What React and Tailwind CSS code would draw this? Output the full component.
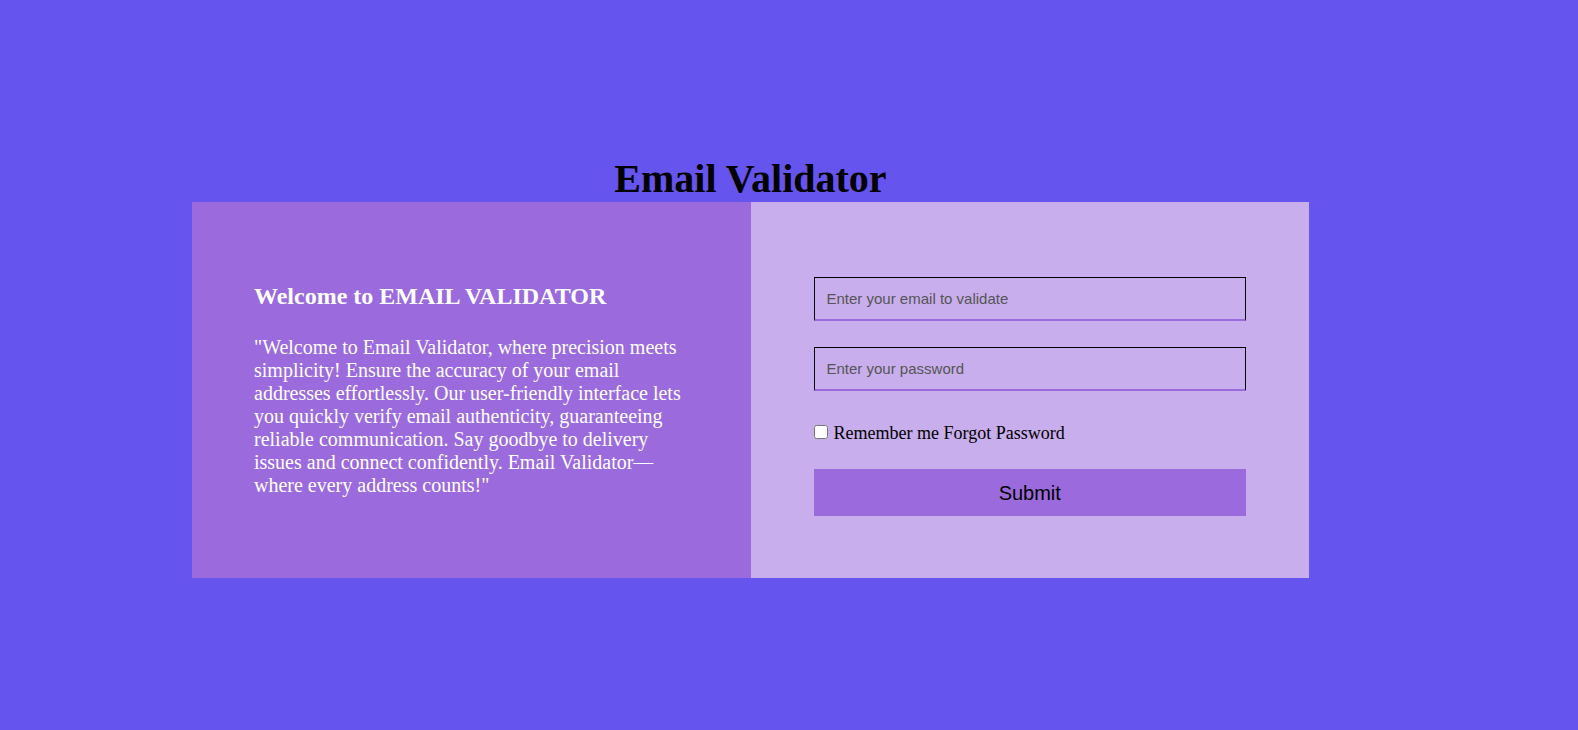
import React from 'react';

const App = () => {
  return (
    <div className="min-h-screen w-full bg-[#6554ed] flex items-center pl-[192px] pt-[4px] font-['Liberation_Serif',serif]">
      <div className="w-[1117px]">
        <h1 className="text-[40px] leading-[46px] font-bold text-black text-center">Email Validator</h1>

        <div className="h-[376px] grid grid-cols-2">
          {/* left: intro */}
          <div className="bg-[#9b6bde] flex flex-col justify-center px-[62px] pb-[2px]">
            <h2 className="text-[24px] leading-[28px] font-bold text-white mb-[26px]">
              Welcome to EMAIL VALIDATOR
            </h2>
            <p className="text-[20px] leading-[23px] text-white">
              "Welcome to Email Validator, where precision meets simplicity! Ensure the accuracy of your email
              addresses effortlessly. Our user-friendly interface lets you quickly verify email authenticity,
              guaranteeing reliable communication. Say goodbye to delivery issues and connect confidently. Email
              Validator—where every address counts!"
            </p>
          </div>

          {/* right: form */}
          <div className="bg-[#c8aeec] px-[63px] pt-[75px]">
            <form className="flex flex-col">
              <input
                type="email"
                placeholder="Enter your email to validate"
                className="h-[44px] w-full border border-black border-b-2 border-b-[#9b6bde] px-3 text-[15px] font-['Liberation_Sans',sans-serif] placeholder:text-[#555] outline-none"
              />
              <input
                type="password"
                placeholder="Enter your password"
                className="mt-[26px] h-[44px] w-full border border-black border-b-2 border-b-[#9b6bde] px-3 text-[15px] font-['Liberation_Sans',sans-serif] placeholder:text-[#555] outline-none"
              />
              <label className="mt-[32px] flex items-center h-[21px] text-[18px] text-black">
                <input type="checkbox" className="w-[14px] h-[14px] mr-[6px] -mt-[3px]" />
                Remember me Forgot Password
              </label>
              <button
                type="button"
                className="mt-[25px] h-[47px] w-full bg-[#9b6bde] text-[20px] text-black font-['Liberation_Sans',sans-serif]"
              >
                Submit
              </button>
            </form>
          </div>
        </div>
      </div>
    </div>
  );
};

export default App;
